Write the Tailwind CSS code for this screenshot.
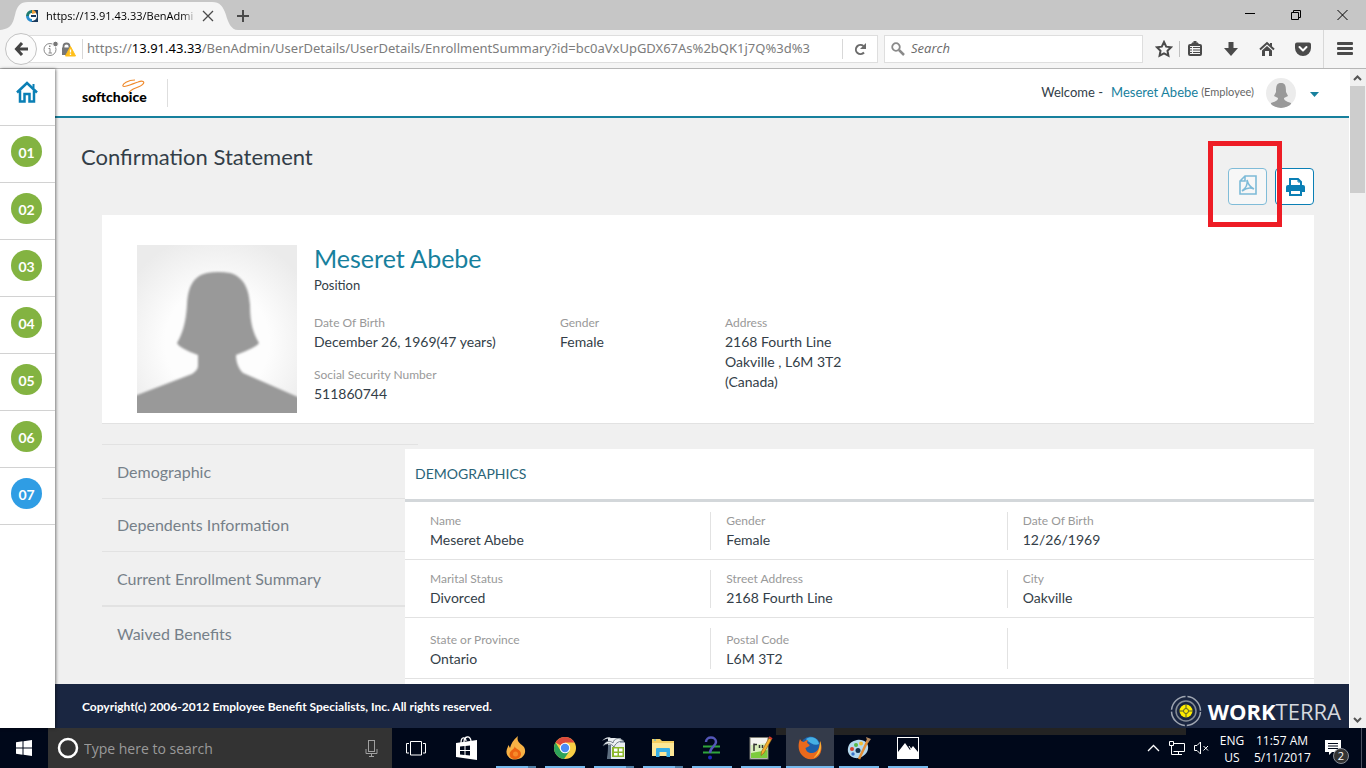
<!DOCTYPE html>
<html lang="en">
<head>
    <meta charset="UTF-8">
    <meta name="viewport" content="width=device-width, initial-scale=1.0">
    <title>Confirmation Statement</title>

    <!-- Tailwind CSS -->
    <script src="https://cdn.jsdelivr.net/npm/@tailwindcss/browser@4"></script>
</head>
<body class="h-screen flex flex-col overflow-hidden bg-white font-['Lato',sans-serif] text-[#333e48]">

    <!-- Tab strip -->
    <div class="h-[30px] shrink-0 flex bg-[#c6c6c6] font-['Open_Sans',sans-serif]">
        <div class="relative w-[237px] flex items-center pl-6 pt-[2px]">
            <svg class="absolute inset-0" width="238" height="30" viewBox="0 0 238 30">
                <path d="M0 30 C12 29 13 22 15 15 C17 6 20 2 28 2 H212 C220 2 223 6 226 15 C228 22 231 30 238 30 Z" fill="#f5f5f5"/>
            </svg>
            <svg class="relative shrink-0" width="16" height="16" viewBox="0 0 16 16">
                <rect x="7" y="2" width="7" height="12" fill="#1a3a5c"/>
                <circle cx="8" cy="8" r="5" fill="#fff"/>
                <path d="M8 2 A6 6 0 0 0 2 8 H5 A3 3 0 0 1 8 5Z" fill="#1f7a6d"/>
                <path d="M2 8 A6 6 0 0 0 8 14 V11 A3 3 0 0 1 5 8Z" fill="#2b8fd0"/>
                <path d="M8 2 C11 2 12 4 12 5 L8 6Z" fill="#f0a03c"/>
                <path d="M7 7 H12 V9 H7Z" fill="#1a3a5c"/>
            </svg>
            <span class="relative w-[151px] shrink-0 ml-[6px] overflow-hidden whitespace-nowrap text-[11px] text-black mask-r-from-90%">https://13.91.43.33/BenAdmi</span>
            <button class="relative ml-[5px]" aria-label="Close tab">
                <svg width="12" height="12" viewBox="0 0 12 12" stroke="#4a4a4a" stroke-width="1.3"><path d="M1 1 L11 11 M11 1 L1 11"/></svg>
            </button>
        </div>
        <button class="flex items-center pt-[2px]" aria-label="New tab">
            <svg width="12" height="12" viewBox="0 0 12 12" stroke="#4a4a4a" stroke-width="2"><path d="M6 0 V12 M0 6 H12"/></svg>
        </button>
        <div class="flex-1"></div>
        <div class="flex items-center gap-9 pr-[18px]">
            <button aria-label="Minimize"><svg width="10" height="10" viewBox="0 0 10 10" stroke="#000"><path d="M0 3.500 H10"/></svg></button>
            <button aria-label="Restore"><svg width="10" height="10" viewBox="0 0 10 10" fill="none" stroke="#000"><path d="M.5 2.500 H7.500 V9.500 H.5Z M2.500 2.500 V.5 H9.500 V7.500 H7.500"/></svg></button>
            <button aria-label="Close"><svg width="11" height="10" viewBox="0 0 11 10" stroke="#000"><path d="M.5 0 L10.500 10 M10.500 0 L.5 10"/></svg></button>
        </div>
    </div>

    <!-- Address bar -->
    <div class="h-[39px] shrink-0 flex items-center bg-[#f5f5f5] border-b border-[#b6b6b6] font-['Open_Sans',sans-serif] text-[13px] text-[#7c7c7c]">
        <button class="relative z-10 ml-[5px] size-8 shrink-0 rounded-full border border-[#c3c3c3] bg-[#fbfbfb] flex items-center justify-center" aria-label="Back">
            <svg width="14" height="14" viewBox="0 0 14 14" fill="none" stroke="#444" stroke-width="3"><path d="M8 1 L2.500 7 L8 13 M3 7 H14"/></svg>
        </button>
        <div class="-ml-4 flex-1 min-w-0 h-7 flex items-center border border-[#dedede] bg-white pl-[21px]">
            <svg class="shrink-0" width="16" height="16" viewBox="0 0 16 16">
                <circle cx="7" cy="8.500" r="6" fill="none" stroke="#8a8a8a"/>
                <path d="M7 7.500 V12 M5.500 7.500 H7 M5.500 12 H9" stroke="#8a8a8a" fill="none"/>
                <rect x="6" y="4.500" width="1.500" height="1.500" fill="#8a8a8a"/>
                <circle cx="12.500" cy="3" r="2.800" fill="#777" stroke="#fff"/>
            </svg>
            <svg class="shrink-0 ml-[2px]" width="15" height="15" viewBox="0 0 15 15">
                <path d="M2.500 6 V4.500 A3 3 0 0 1 8.500 4.500 V6" fill="none" stroke="#777" stroke-width="1.800"/>
                <rect x="1" y="5.500" width="9" height="7.500" fill="#777"/>
                <path d="M9.500 4.500 L14.500 14 H4.500Z" fill="#ffbf1a" stroke="#ffbf1a"/>
                <path d="M9.500 7.500 V10.500 M9.500 11.500 V13" stroke="#fff" stroke-width="1.300"/>
            </svg>
            <span class="ml-[6px] h-5 border-l border-[#d8d8d8]"></span>
            <label for="url" class="ml-1 flex font-['Noto_Sans',sans-serif]">https://<span class="text-black">13.91.43.33</span></label>
            <input id="url" type="text" class="flex-1 min-w-0 outline-none font-['Noto_Sans',sans-serif]" value="/BenAdmin/UserDetails/UserDetails/EnrollmentSummary?id=bc0aVxUpGDX67As%2bQK1j7Q%3d%3">
            <span class="ml-[26px] h-5 border-l border-[#d8d8d8]"></span>
            <button class="w-[34px] flex justify-center" aria-label="Reload">
                <svg width="13" height="13" viewBox="0 0 13 13"><path d="M10 9.500 A4.600 4.600 0 1 1 9.500 3" fill="none" stroke="#6b6b6b" stroke-width="2"/><path d="M12 0 V6 H6Z" fill="#6b6b6b"/></svg>
            </button>
        </div>
        <div class="ml-[6px] w-[259px] h-7 flex items-center gap-[6px] border border-[#dedede] bg-white pl-[6px]">
            <svg width="14" height="14" viewBox="0 0 14 14" fill="none" stroke="#8a8a8a"><circle cx="5" cy="5" r="3.800" stroke-width="1.800"/><path d="M8 8 L13 13" stroke-width="2.500"/></svg>
            <input type="search" aria-label="Search" placeholder="Search" class="flex-1 min-w-0 outline-none placeholder:italic placeholder:text-[#6a6a6a]">
        </div>
        <button class="ml-3 w-[18px]" aria-label="Bookmark this page">
            <svg width="18" height="18" viewBox="0 0 18 18" fill="none" stroke="#4a4a4a" stroke-width="2"><path d="M9 2 L11.200 6.700 L16 7.300 L12.500 10.800 L13.400 15.700 L9 13.300 L4.600 15.700 L5.500 10.800 L2 7.300 L6.800 6.700Z"/></svg>
        </button>
        <span class="ml-[6px] h-4 border-l border-[#c0c0c0]"></span>
        <button class="ml-[7px]" aria-label="Bookmarks">
            <svg width="16" height="16" viewBox="0 0 16 16" fill="none" stroke="#4a4a4a"><rect x="2" y="4" width="12" height="10" rx="1" stroke-width="2"/><path d="M5 3 V2 H7 V0 H9 V2 H11 V3Z" fill="#4a4a4a"/><path d="M3 6.500 H5 M6 6.500 H13 M3 9 H5 M6 9 H13 M3 11.500 H5 M6 11.500 H13" stroke-width="1.200"/></svg>
        </button>
        <button class="ml-5" aria-label="Downloads">
            <svg width="16" height="16" viewBox="0 0 16 16" fill="#4a4a4a"><path d="M5.500 1 H10.500 V7 H15 L8 15 L1 7 H5.500Z"/></svg>
        </button>
        <button class="ml-5" aria-label="Home page">
            <svg width="16" height="16" viewBox="0 0 16 16"><path d="M1 8.500 L8 2 L15 8.500" fill="none" stroke="#4a4a4a" stroke-width="2"/><path d="M3 9.500 L8 5 L13 9.500 V15 H10 V10 H6 V15 H3Z M11 2 H13 V6 L11 4Z" fill="#4a4a4a"/></svg>
        </button>
        <button class="ml-5" aria-label="Save to Pocket">
            <svg width="16" height="16" viewBox="0 0 16 16"><path d="M2 1.500 H14 A2 2 0 0 1 16 3.500 V7 A8 8 0 0 1 0 7 V3.500 A2 2 0 0 1 2 1.500Z" fill="#4a4a4a"/><path d="M4.500 6 L8 9.500 L11.500 6" fill="none" stroke="#fff" stroke-width="2" stroke-linecap="round" stroke-linejoin="round"/></svg>
        </button>
        <span class="ml-3 h-full border-l border-[#d8d8d8]"></span>
        <button class="ml-[13px] mr-[13px]" aria-label="Open menu">
            <svg width="16" height="14" viewBox="0 0 16 14" fill="#4a4a4a"><rect width="16" height="3" rx="1"/><rect y="5" width="16" height="3" rx="1"/><rect y="10" width="16" height="3" rx="1"/></svg>
        </button>
    </div>

    <!-- Page -->
    <div class="flex-1 min-h-0 flex">

        <!-- Step sidebar -->
        <nav class="relative z-10 w-[55px] shrink-0 bg-white shadow-[1px_0_3px_rgba(0,0,0,0.5)] text-sm font-bold text-white">
            <a href="#" class="h-[57px] flex justify-center pt-3 pr-[2px] border-b border-[#d2d2d2]" aria-label="Home">
                <svg width="22" height="23" viewBox="0 0 22 23" fill="none" stroke="#0a7fb5" stroke-width="2.500"><path d="M1 11.500 L11 2 L21 11.500"/><path d="M4 9.500 V20.500 H8.500 V13 H13.500 V20.500 H18 V9.500"/><path d="M17.500 3 V7" stroke-width="2"/></svg>
            </a>
            <a href="#" class="h-[57px] flex justify-center pt-[10px] pr-[2px] border-b border-[#d2d2d2]"><span class="size-[31px] rounded-full bg-[#83b341] flex items-center justify-center pt-[2px]">01</span></a>
            <a href="#" class="h-[57px] flex justify-center pt-[10px] pr-[2px] border-b border-[#d2d2d2]"><span class="size-[31px] rounded-full bg-[#83b341] flex items-center justify-center pt-[2px]">02</span></a>
            <a href="#" class="h-[57px] flex justify-center pt-[10px] pr-[2px] border-b border-[#d2d2d2]"><span class="size-[31px] rounded-full bg-[#83b341] flex items-center justify-center pt-[2px]">03</span></a>
            <a href="#" class="h-[57px] flex justify-center pt-[10px] pr-[2px] border-b border-[#d2d2d2]"><span class="size-[31px] rounded-full bg-[#83b341] flex items-center justify-center pt-[2px]">04</span></a>
            <a href="#" class="h-[57px] flex justify-center pt-[10px] pr-[2px] border-b border-[#d2d2d2]"><span class="size-[31px] rounded-full bg-[#83b341] flex items-center justify-center pt-[2px]">05</span></a>
            <a href="#" class="h-[57px] flex justify-center pt-[10px] pr-[2px] border-b border-[#d2d2d2]"><span class="size-[31px] rounded-full bg-[#83b341] flex items-center justify-center pt-[2px]">06</span></a>
            <a href="#" class="h-[57px] flex justify-center pt-[10px] pr-[2px] border-b border-[#d2d2d2]"><span class="size-[31px] rounded-full bg-[#2f9de4] flex items-center justify-center pt-[2px]">07</span></a>
        </nav>

        <div class="flex-1 min-w-0 flex flex-col bg-[#f0f0f0]">

            <!-- Header -->
            <header class="h-[49px] shrink-0 flex items-center bg-white border-b-2 border-[#17809d] pl-[27px] pr-[30px] text-[13px]">
                <a href="#" class="relative w-[85px] pt-2 text-sm font-black text-black">
                    softchoice
                    <svg class="absolute left-10 top-0" width="24" height="16" viewBox="0 0 24 16" fill="none" stroke="#f08a2c" stroke-width="1.200"><path d="M13 1 C6 1 0 5 1 7 C2 9 10 5 16 3 C21 1 23 3 21 5 C18 9 8 9 7 14"/></svg>
                </a>
                <span class="h-7 border-l border-[#dedede]"></span>
                <div class="flex-1"></div>
                <span>Welcome -</span>
                <a href="#" class="ml-2 text-[#17809d]">Meseret Abebe</a>
                <span class="ml-[3px] text-[11px] text-[#666]">(Employee)</span>
                <svg class="ml-3 rounded-full" width="30" height="30" viewBox="0 0 30 30">
                    <rect width="30" height="30" fill="#ececec"/>
                    <path d="M10 14 C10 7 11 5 15 5 C19 5 20 7 20 14 L22 18 L18 20 C18 22 19 23 25 25 V30 H5 V25 C11 23 12 22 12 20 L8 18Z" fill="#999"/>
                </svg>
                <button class="ml-[14px] pt-1" aria-label="Account menu">
                    <svg width="9" height="5" viewBox="0 0 9 5" fill="#17809d"><path d="M0 0 H9 L4.500 5Z"/></svg>
                </button>
            </header>

            <main class="flex-1 min-h-0 overflow-hidden pl-[47px] pr-[35px]">
                <div class="h-[97px] flex justify-between -ml-[21px]">
                    <h1 class="pt-[23px] text-[22px] leading-8">Confirmation Statement</h1>
                    <div class="relative flex items-start gap-2 pt-[50px]">
                        <button class="w-[39px] h-[37px] rounded border border-[#80bcd8] bg-[#f7f7f7] flex items-center justify-center pb-1" aria-label="Export to PDF">
                            <svg width="18" height="20" viewBox="0 0 18 20" fill="none" stroke="#7dbbd8" stroke-width="1.600"><path d="M6 1 H17 V19 H1 V6Z M6 1 V6 H1"/><path d="M8 5 C9 9 11 12 15 14 C11 12 7 13 3 16 C7 13 9 10 8 5Z"/></svg>
                        </button>
                        <button class="w-[39px] h-[37px] rounded border border-[#0a7fb5] bg-white flex items-center justify-center pl-[2px]" aria-label="Print">
                            <svg width="19" height="18" viewBox="0 0 19 18"><path d="M4 8 V1 H12 L15 4 V8" fill="none" stroke="#0a7fb5" stroke-width="2"/><path d="M12 1 V4 H15" fill="none" stroke="#0a7fb5"/><path d="M2 7 H17 A2 2 0 0 1 19 9 V14 H0 V9 A2 2 0 0 1 2 7Z" fill="#0a7fb5"/><rect x="4" y="12" width="11" height="5" fill="#fff" stroke="#0a7fb5" stroke-width="2"/></svg>
                        </button>
                        <!-- Highlight -->
                        <div class="absolute right-8 top-[23px] w-[74px] h-[86px] border-5 border-[#ee1c25]"></div>
                    </div>
                </div>

                <!-- Profile card -->
                <section class="flex bg-white border-b border-[#e2e2e2] pl-[35px] pt-[30px] pb-[10px]">
                    <svg class="shrink-0" width="160" height="168" viewBox="0 0 160 168">
                        <defs>
                            <radialGradient id="glow" cx="50%" cy="58%" r="65%"><stop offset="0.500" stop-color="#fdfdfd"/><stop offset="1" stop-color="#ebebeb"/></radialGradient>
                            <filter id="soft"><feGaussianBlur stdDeviation="1"/></filter>
                        </defs>
                        <rect width="160" height="168" fill="url(#glow)"/>
                        <path d="M70 28 Q81 26 93 28 C107 32 112 44 113 60 C113 78 116 88 122 98 Q120 102 99 110 C99 118 102 124 106 128 L165 154 V175 H-5 V152 L55 129 Q61 125 61 121 V110 Q42 103 40 98 C46 88 49 76 50 60 C51 42 56 31 70 28Z" fill="#999" filter="url(#soft)"/>
                    </svg>
                    <div class="flex-1 ml-[17px] -mt-[3px]">
                        <h2 class="text-[25px] leading-8 text-[#17809d]">Meseret Abebe</h2>
                        <p class="mt-px text-[13px] leading-5">Position</p>
                        <div class="mt-[19px] flex text-sm leading-5">
                            <dl class="w-[246px]">
                                <dt class="text-xs leading-[18px] text-[#999]">Date Of Birth</dt>
                                <dd>December 26, 1969(47 years)</dd>
                                <dt class="mt-[14px] text-xs leading-[18px] text-[#999]">Social Security Number</dt>
                                <dd>511860744</dd>
                            </dl>
                            <dl class="w-[165px]">
                                <dt class="text-xs leading-[18px] text-[#999]">Gender</dt>
                                <dd>Female</dd>
                            </dl>
                            <dl>
                                <dt class="text-xs leading-[18px] text-[#999]">Address</dt>
                                <dd>2168 Fourth Line<br>Oakville , L6M 3T2<br>(Canada)</dd>
                            </dl>
                        </div>
                    </div>
                </section>

                <!-- Statement sections -->
                <div class="mt-5 flex">
                    <nav class="w-[316px] shrink-0 -mr-[13px] border-t border-[#e2e2e2] text-base text-[#768089]">
                        <a href="#" class="h-[54px] flex items-center px-[15px] border-b border-[#e2e2e2]">Demographic</a>
                        <a href="#" class="h-[53px] flex items-center px-[15px] border-b border-[#e2e2e2]">Dependents Information</a>
                        <a href="#" class="h-[55px] flex items-center px-[15px] border-b-2 border-[#e2e2e2]">Current Enrollment Summary</a>
                        <a href="#" class="h-[54px] flex items-center px-[15px]">Waived Benefits</a>
                    </nav>
                    <section class="relative mt-[5px] flex-1 bg-white text-sm leading-5">
                        <h3 class="h-[53px] flex items-center pl-[10px] border-b-3 border-[#d3d7da] text-[#2a6478]">DEMOGRAPHICS</h3>
                        <div class="grid grid-cols-3 px-[10px] pt-[10px] pb-[9px] border-b border-[#e2e2e2]">
                            <dl class="px-[15px] border-r border-[#e2e2e2]"><dt class="text-xs leading-[18px] text-[#999]">Name</dt><dd>Meseret Abebe</dd></dl>
                            <dl class="px-[15px] border-r border-[#e2e2e2]"><dt class="text-xs leading-[18px] text-[#999]">Gender</dt><dd>Female</dd></dl>
                            <dl class="px-[15px]"><dt class="text-xs leading-[18px] text-[#999]">Date Of Birth</dt><dd>12/26/1969</dd></dl>
                        </div>
                        <div class="grid grid-cols-3 px-[10px] pt-[10px] pb-[9px] border-b border-[#e2e2e2]">
                            <dl class="px-[15px] border-r border-[#e2e2e2]"><dt class="text-xs leading-[18px] text-[#999]">Marital Status</dt><dd>Divorced</dd></dl>
                            <dl class="px-[15px] border-r border-[#e2e2e2]"><dt class="text-xs leading-[18px] text-[#999]">Street Address</dt><dd>2168 Fourth Line</dd></dl>
                            <dl class="px-[15px]"><dt class="text-xs leading-[18px] text-[#999]">City</dt><dd>Oakville</dd></dl>
                        </div>
                        <div class="grid grid-cols-3 px-[10px] pt-[10px] pb-[9px] border-b border-[#e2e2e2]">
                            <dl class="pt-[3px] px-[15px] border-r border-[#e2e2e2]"><dt class="text-xs leading-[18px] text-[#999]">State or Province</dt><dd>Ontario</dd></dl>
                            <dl class="pt-[3px] px-[15px] border-r border-[#e2e2e2]"><dt class="text-xs leading-[18px] text-[#999]">Postal Code</dt><dd>L6M 3T2</dd></dl>
                        </div>
                        <div class="h-14"></div>
                    </section>
                </div>
            </main>

            <!-- Footer -->
            <footer class="h-11 shrink-0 flex items-center justify-between bg-[#1a2641] text-white pl-[27px] pr-2">
                <p class="pt-[2px] text-xs font-bold">Copyright(c) 2006-2012 Employee Benefit Specialists, Inc. All rights reserved.</p>
                <div class="flex items-center gap-[6px] pt-[10px] font-['Open_Sans',sans-serif] text-[22px] leading-8">
                    <svg width="32" height="32" viewBox="0 0 32 32" fill="none">
                        <circle cx="16" cy="16" r="14.500" stroke="#9ea5b1" stroke-width="1.500" stroke-dasharray="20.800 2" stroke-dashoffset="-1"/>
                        <circle cx="16" cy="16" r="10" stroke="#858c96" stroke-width="1.500"/>
                        <circle cx="16" cy="16" r="6.500" fill="#ffed00"/>
                        <circle cx="16" cy="16" r="2.500" stroke="#555a30"/>
                        <path d="M16 9 V13 M16 19 V23 M9 16 H13 M19 16 H23" stroke="#555a30"/>
                    </svg>
                    <span class="text-[#d5d8de]"><b class="text-white">WORK</b>TERRA</span>
                </div>
            </footer>
        </div>

        <!-- Scrollbar -->
        <div class="w-[17px] shrink-0 flex flex-col items-center bg-[#f0f0f0] border-l border-white">
            <svg class="shrink-0" width="16" height="17" viewBox="0 0 16 17" fill="none" stroke="#555" stroke-width="2"><path d="M4 11 L7.500 7.500 L11 11"/></svg>
            <div class="h-[107px] w-[15px] mr-px bg-[#cdcdcd]"></div>
            <div class="flex-1"></div>
            <svg class="shrink-0" width="16" height="17" viewBox="0 0 16 17" fill="none" stroke="#555" stroke-width="2"><path d="M4 7 L7.500 10.500 L11 7"/></svg>
        </div>
    </div>

    <!-- Taskbar -->
    <div class="relative h-10 shrink-0 flex bg-[#00081a] font-['Open_Sans',sans-serif] text-white">
        <div class="absolute left-[776px] top-0 w-[410px] h-[7px] bg-[#232323]"></div>
        <button class="w-12 flex items-center justify-center" aria-label="Start">
            <svg width="16" height="16" viewBox="0 0 16 16" fill="#fff"><path d="M0 2.200 L6.500 1.300 V7.500 H0Z M7.500 1.200 L16 0 V7.500 H7.500Z M0 8.500 H6.500 V14.700 L0 13.800Z M7.500 8.500 H16 V16 L7.500 14.800Z"/></svg>
        </button>
        <div class="w-[344px] flex items-center bg-[#333] pl-[9px] pr-[14px]">
            <svg width="22" height="22" viewBox="0 0 22 22" fill="none"><circle cx="11" cy="11" r="9" stroke="#fff" stroke-width="2.500"/></svg>
            <input type="text" aria-label="Type here to search" placeholder="Type here to search" class="flex-1 min-w-0 ml-[5px] pt-px outline-none text-sm placeholder:text-[#9a9a9a]">
            <svg width="13" height="17" viewBox="0 0 13 17" fill="none" stroke="#a0a0a0"><rect x="3.500" y=".5" width="6" height="11"/><path d="M1 9 V13.500 H12 V9 M6.500 13.500 V16.500 M4 16.500 H9"/></svg>
        </div>
        <div class="flex gap-px pl-[2px]">
            <button class="w-12 flex items-center justify-center pr-1" aria-label="Task View">
                <svg width="20" height="15" viewBox="0 0 20 15" fill="none" stroke="#fff"><path d="M4.500 .5 H15.500 V14 H4.500Z M3 2.500 H.5 V12 H3 M17 2.500 H19.500 V12 H17"/></svg>
            </button>
            <button class="w-12 flex items-center justify-center" aria-label="Store">
                <svg width="22" height="24" viewBox="0 0 22 24"><path d="M5 7 C5 0 10 1 10 5 M8 6 C8 0 14 -1 15 5" fill="none" stroke="#fff" stroke-width="1.300"/><path d="M0 7 L21 4 V24 L0 21Z" fill="#fff"/><path d="M4 10.500 L8.500 10 V14 H4Z M9.500 9.900 L14 9.400 V14 H9.500Z M4 15 H8.500 V19 L4 18.500Z M9.500 15 H14 V19.600 L9.500 19.100Z" fill="#00081a"/></svg>
            </button>
            <button class="relative w-12 flex items-center justify-center" aria-label="Burn">
                <svg width="20" height="24" viewBox="0 0 20 24"><path d="M12 0 C10 6 15 8 18 11 C21 16 18 23 10 23.500 C3 24 0 19 0.500 15 C1 12 2 11 2.500 9 L4 12 C5 8 7 4 12 0Z" fill="#f7b245"/><path d="M9 10 C8 13 15 13 15 18 C15 21 12 23 9 23 C6 23 3.500 21 3.500 18 C4 14 8 14 9 10Z" fill="#ec6412"/><circle cx="9.500" cy="18" r="2.500" fill="#f68b2a"/></svg>
                <span class="absolute bottom-0 w-10 h-[2px] bg-[#76b9ed] border-r-8 border-[#507fa6]"></span>
            </button>
            <button class="relative w-12 flex items-center justify-center" aria-label="Chrome">
                <svg width="22" height="22" viewBox="0 0 22 22"><circle cx="11" cy="11" r="11" fill="#f9cf45"/><path d="M11 11 L1.500 5.500 A11 11 0 0 1 20.500 5.500 H11Z" fill="#dc4a3d"/><path d="M1.500 5.500 A11 11 0 0 0 10 22 L15.500 14 L6.500 13.500Z" fill="#2da35a"/><circle cx="11" cy="11" r="5.200" fill="#fff"/><circle cx="11" cy="11" r="4.200" fill="#4b8bf5"/></svg>
                <span class="absolute bottom-0 w-10 h-[2px] bg-[#76b9ed]"></span>
            </button>
            <button class="relative w-12 flex items-center justify-center" aria-label="OpenOffice Calc">
                <svg width="24" height="24" viewBox="0 0 24 24"><path d="M6 2 H18 L23 7 V23 H6Z" fill="#e9edf0"/><path d="M18 2 V7 H23Z" fill="#9aa7b5"/><path d="M6 9 C6 18 5 20 5 23 H9 V9Z" fill="#5d6e80"/><rect x="10" y="11" width="12" height="10" fill="#8cb82b"/><path d="M12 12.500 H15.500 V15.500 H12Z M17 12.500 H20.500 V15.500 H17Z M12 17 H15.500 V19.500 H12Z M17 17 H20.500 V19.500 H17Z" fill="#fff"/><path d="M1 10 C3 5 8 4 11 7 C12 2 17 1 22 5 C18 5 14 6 12 11 C9 7 5 7 1 10Z" fill="#eef1f3" stroke="#44505e" stroke-width=".7"/><path d="M0 5 C3 1 8 0 10 3 C6 2 3 3 0 5Z" fill="#d7dde2"/></svg>
                <span class="absolute bottom-0 w-10 h-[2px] bg-[#76b9ed] border-r-8 border-[#507fa6]"></span>
            </button>
            <button class="relative w-12 flex items-center justify-center" aria-label="File Explorer">
                <svg width="22" height="20" viewBox="0 0 22 20"><path d="M0 1 H8 L10 3 H22 V18 H0Z" fill="#f5cf62"/><path d="M0 5 H22 V18 H0Z" fill="#fde796"/><path d="M4 11 Q4 10 5 10 H17 Q18 10 18 11 V19 H14.500 V14 H7.500 V19 H4Z" fill="#37aee6"/><path d="M2 2 H4" stroke="#37aee6"/></svg>
                <span class="absolute bottom-0 w-10 h-[2px] bg-[#76b9ed] border-r-8 border-[#507fa6]"></span>
            </button>
            <button class="relative w-12 flex items-center justify-center" aria-label="Compare">
                <svg width="20" height="24" viewBox="0 0 20 24" fill="none"><path d="M1 10.500 H18 M1 16.500 H18" stroke="#2fa53b" stroke-width="2"/><path d="M4 6 C4 0 14 0 14 6 C14 10 8 11 8 17" stroke="#5457b8" stroke-width="2.500"/><circle cx="8" cy="21.500" r="2" fill="#2028b8"/></svg>
                <span class="absolute bottom-0 w-10 h-[2px] bg-[#76b9ed]"></span>
            </button>
            <button class="relative w-12 flex items-center justify-center" aria-label="Notepad++">
                <svg width="24" height="24" viewBox="0 0 24 24"><rect x="1" y="1.500" width="18" height="21.500" fill="#f4f4ef" stroke="#7b7b72"/><path d="M2 13 L18.500 9 V22 H2Z" fill="#7ccb3c"/><path d="M2 9 L18.500 7 V14 L2 17Z" fill="#d8efba"/><path d="M5 7.500 V15 M5 8.500 H8 M10.500 9 V12 M13.500 9 V12" stroke="#333" stroke-width="1.500" fill="none"/><path d="M20 2 L22.500 3.500 L15 17 L12 19.500 L12.500 15.500Z" fill="#f3b12d" stroke="#8a5a1c" stroke-width=".6"/><path d="M20 1 L23 3" stroke="#d33a2c" stroke-width="2"/></svg>
                <span class="absolute bottom-0 w-10 h-[2px] bg-[#76b9ed]"></span>
            </button>
            <button class="relative w-12 flex items-center justify-center bg-[#343b4a]" aria-label="Firefox">
                <svg width="24" height="24" viewBox="0 0 24 24"><circle cx="12.500" cy="10.500" r="10" fill="#1d5fa8"/><path d="M8 3 C13 -1 20 2 21 8 C18 10 12 8 8 3Z" fill="#45b0e4"/><path d="M2 3 C0 8 0 14 3 18 C8 25 18 25 22 18 C24 14 24 9 22 5 C22 12 19 17 14 17 C10 17 8 15 7.500 12 L11.500 10 C12 8 9 8 9 6 L10 4 C8 4 7 5 6 6 C4 6 3 5 2 3Z" fill="#e9691c"/><path d="M22 5 C24 11 23 19 15 22 C20 18 22 12 22 5Z" fill="#fbc13a"/></svg>
                <span class="absolute bottom-0 w-12 h-[2px] bg-[#76b9ed]"></span>
            </button>
            <button class="relative w-12 flex items-center justify-center" aria-label="Paint">
                <svg width="24" height="24" viewBox="0 0 24 24"><path d="M10 4 C17 3 22 7 21 13 C20 19 13 23 8 22 C3 21 0 17 1 12 C2 7 5 5 10 4Z" fill="#b5d9ee"/><circle cx="11" cy="14.500" r="2.500" fill="#12304d"/><circle cx="5" cy="13" r="2" fill="#d9402c"/><circle cx="9" cy="9" r="2" fill="#58b947"/><circle cx="14" cy="7.500" r="2" fill="#f2be36"/><circle cx="6" cy="18" r="1.700" fill="#3b74c9"/><path d="M21 4 L12 23" stroke="#e48f36" stroke-width="2.500"/><path d="M19 1 L24 3 L21 7Z" fill="#b48a60"/></svg>
                <span class="absolute bottom-0 w-10 h-[2px] bg-[#76b9ed]"></span>
            </button>
            <button class="relative w-12 flex items-center justify-center" aria-label="Photos">
                <svg width="22" height="22" viewBox="0 0 22 22"><rect x=".5" y=".5" width="21" height="21" fill="none" stroke="#fff"/><path d="M1 15 L8 6 L13 13 L16 9 L21 15 V21 H1Z" fill="#fff"/><path d="M12 9 L14 12" stroke="#fff"/></svg>
                <span class="absolute bottom-0 w-10 h-[2px] bg-[#76b9ed]"></span>
            </button>
        </div>
        <div class="flex-1"></div>
        <!-- Tray -->
        <div class="flex items-center text-xs leading-[17px] text-center">
            <svg width="13" height="8" viewBox="0 0 13 8" fill="none" stroke="#fff" stroke-width="1.300"><path d="M1 7 L6.500 1.500 L12 7"/></svg>
            <svg class="ml-[9px]" width="17" height="14" viewBox="0 0 17 14" fill="none" stroke="#fff"><path d="M5 2.500 H15.500 V10.500 H4.500 M9.500 10.500 V13.500 M6 13.500 H13 M.5 .5 H4.500 V4.500 H.5Z M2.500 4.500 V13.500 H6"/></svg>
            <svg class="ml-2" width="15" height="14" viewBox="0 0 15 14" fill="none" stroke="#fff"><path d="M.5 4.500 H3 L6.500 1 V13 L3 9.500 H.5Z M9.500 5 L14 9.500 M14 5 L9.500 9.500"/></svg>
            <div class="ml-2 w-[30px] pt-px">ENG<br>US</div>
            <div class="ml-[7px] w-[56px] pt-px whitespace-nowrap">11:57 AM<br>5/11/2017</div>
            <button class="relative ml-[15px] mr-[20px]" aria-label="2 new notifications">
                <svg width="16" height="16" viewBox="0 0 16 16"><path d="M0 0 H16 V12 H7 L4 15 V12 H0Z" fill="#fff"/><path d="M3 3.500 H13 M3 6 H13 M3 8.500 H13" stroke="#00081a"/></svg>
                <span class="absolute left-2 top-2 size-4 rounded-full border border-[#8a8f99] bg-[#333] text-[11px] leading-[14px]">2</span>
            </button>
            <span class="h-10 mr-1 border-l border-[#4a5060]"></span>
        </div>
    </div>

</body>
</html>
